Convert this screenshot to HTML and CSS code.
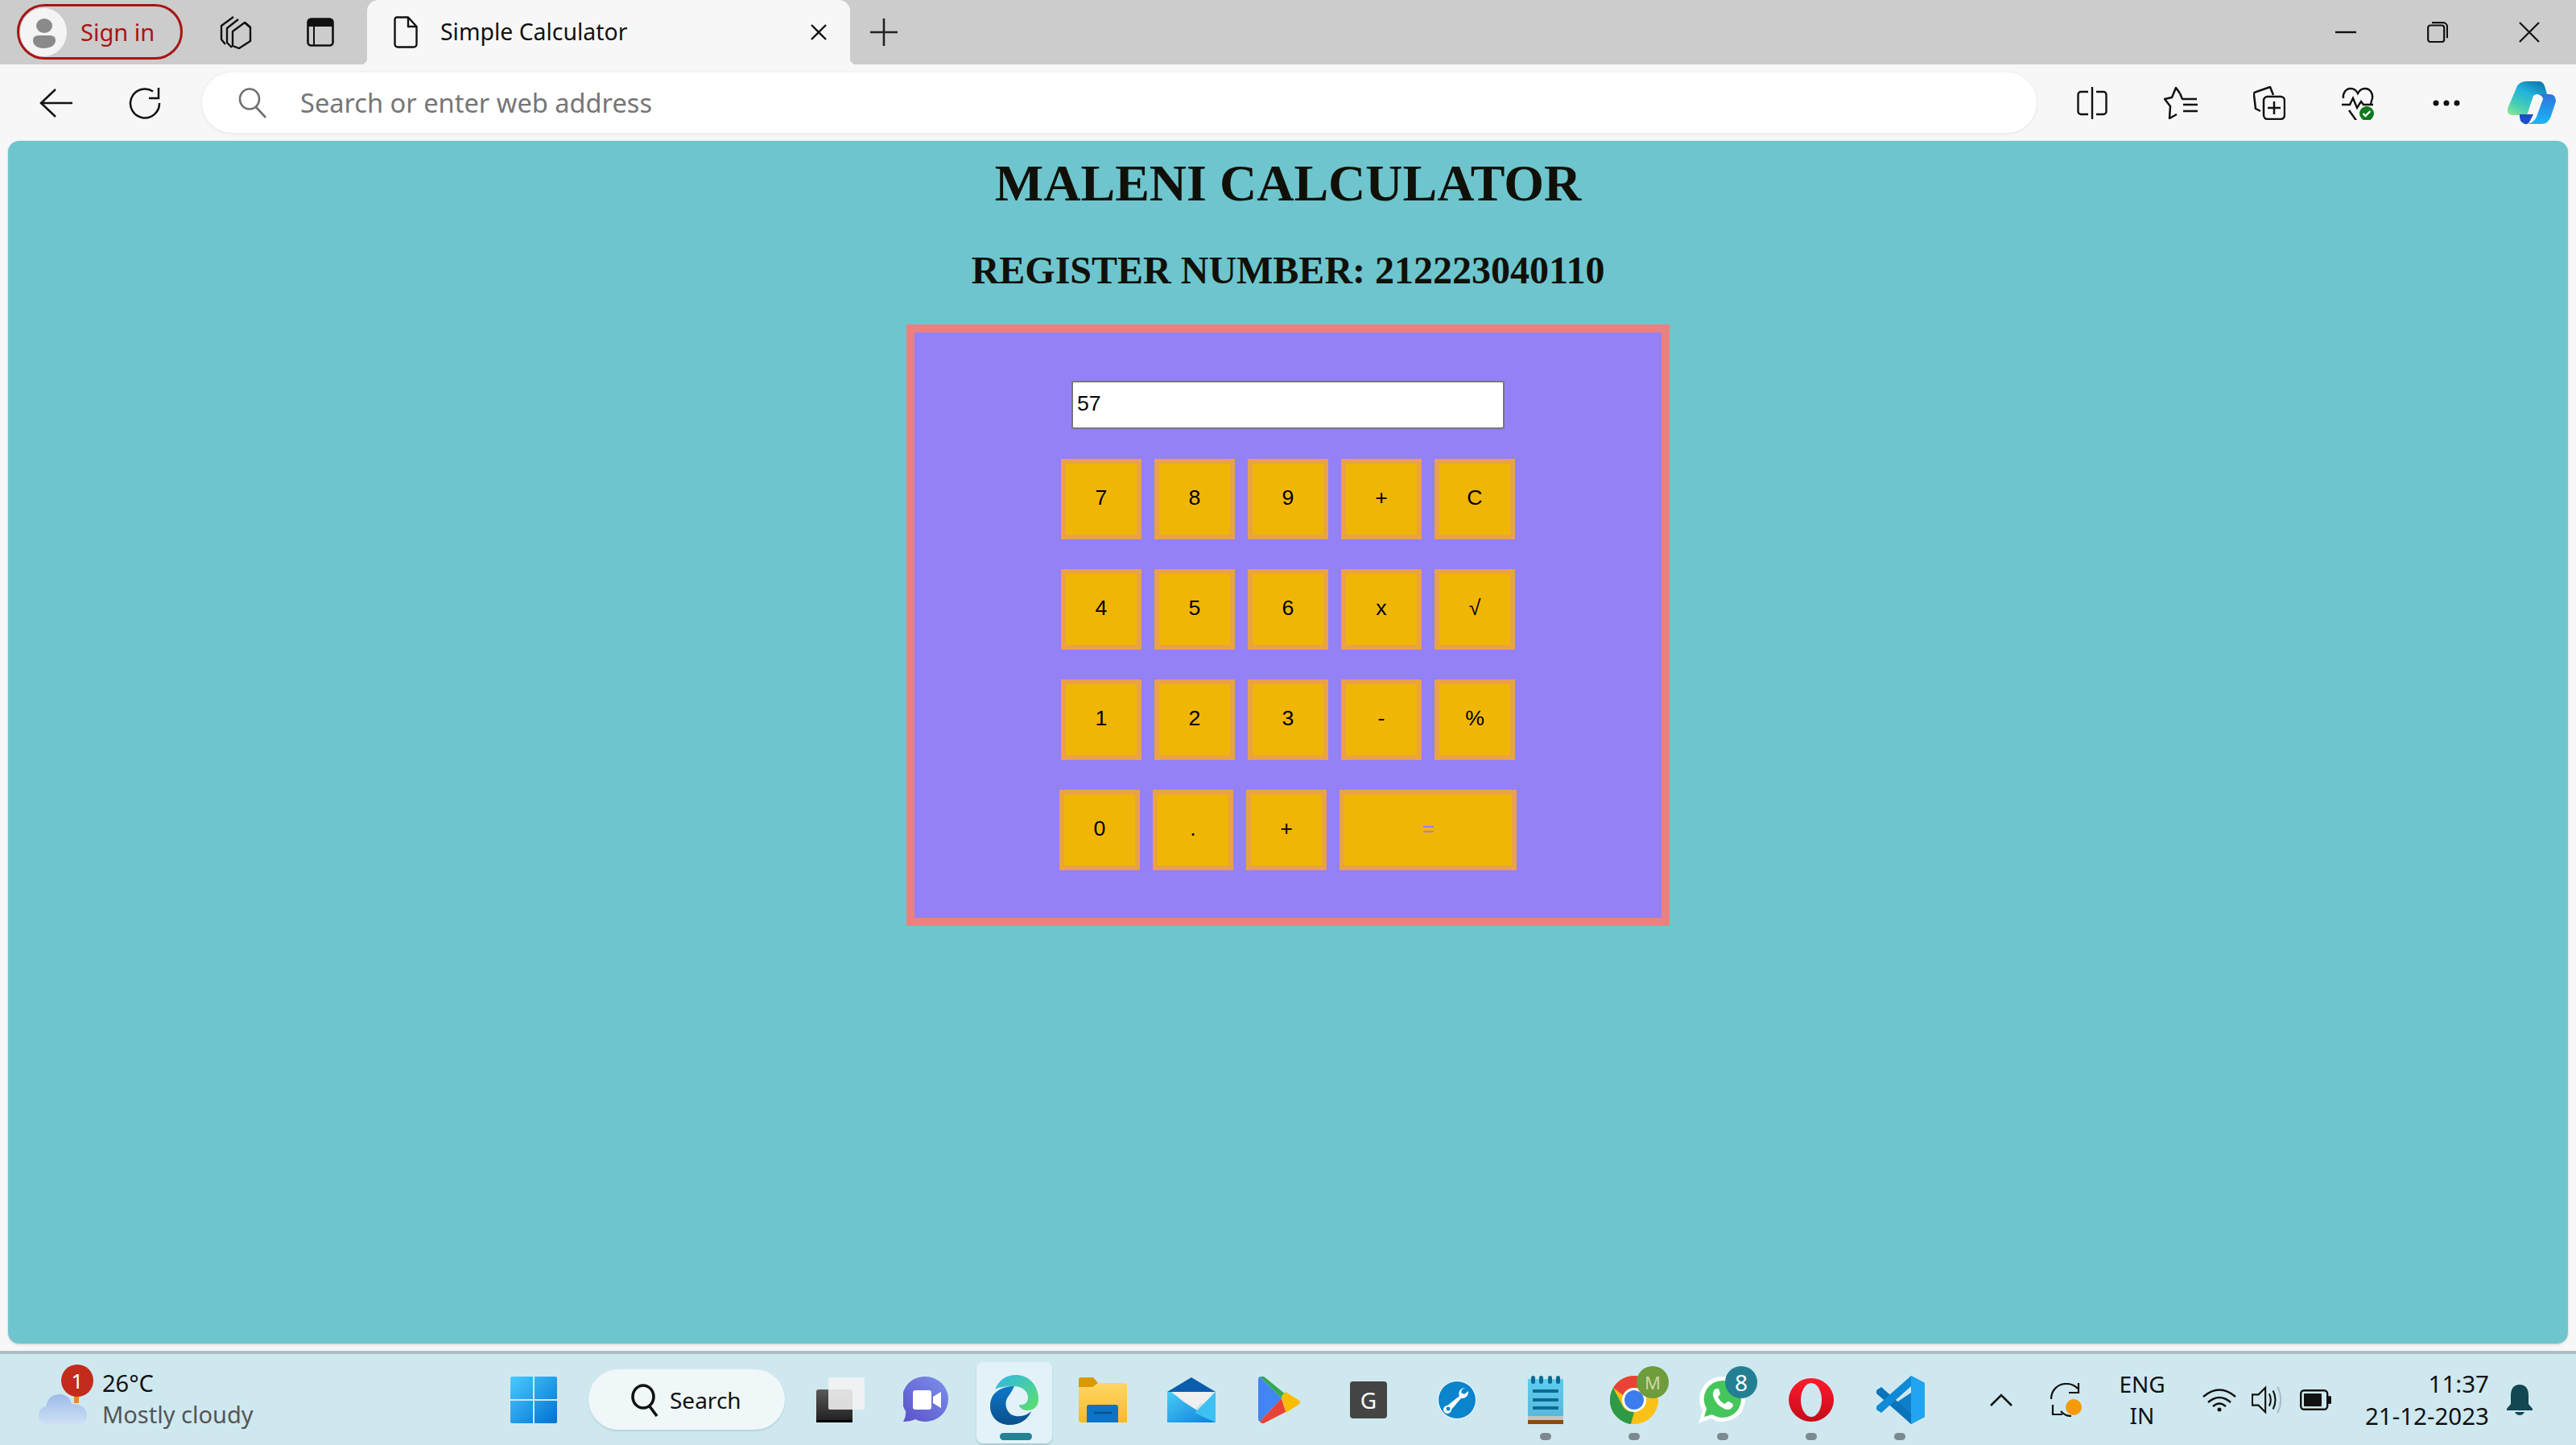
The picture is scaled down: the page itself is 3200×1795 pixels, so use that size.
FILE: index.html
```html
<!DOCTYPE html>
<html lang="en">
<head>
<meta charset="utf-8">
<title>Simple Calculator</title>
<link rel="stylesheet" href="styles.css">
</head>
<body>
<div class="window">
  <header class="tabstrip">
    <div class="signin">
      <span class="avatar"><svg width="58" height="60" viewBox="0 0 58 60"><ellipse cx="30" cy="22" rx="10" ry="9" fill="#8a8a8a"/><path d="M16 40q0-6 7-6h14q7 0 7 6q0 9-15 10q-13-1-13-10z" fill="#8a8a8a"/></svg></span>
      <span class="signin-text">Sign in</span>
    </div>
    <span class="strip-slot"><svg width="40" height="42" viewBox="0 0 40 42" fill="none" stroke="#111" stroke-width="2.4" stroke-linejoin="round"><path d="M17 2L2 13v17l5 6"/><path d="M23 5L9 16v18l6 6"/><path d="M38 15v17L24 41l-8-3V20l15-11z"/><path d="M31 9l7 6"/></svg></span>
    <span class="strip-slot"><svg width="34" height="36" viewBox="0 0 34 36"><rect x="1.5" y="1.5" width="31" height="33" rx="4" fill="none" stroke="#111" stroke-width="2.6"/><path d="M1.5 5.5a4 4 0 0 1 4-4h23a4 4 0 0 1 4 4V11h-31z" fill="#111"/><path d="M9 11v23" stroke="#111" stroke-width="2"/></svg></span>
    <div class="tab">
      <svg class="doc" width="30" height="40" viewBox="0 0 30 40" fill="none" stroke="#111" stroke-width="2.4" stroke-linejoin="round"><path d="M4 1.5h14L28.500 13v22a3.500 3.500 0 0 1-3.500 3.500H5A3.500 3.500 0 0 1 1.500 35V4A2.500 2.500 0 0 1 4 1.500z"/><path d="M18 1.500V13h10.500"/></svg>
      <span class="tab-title">Simple Calculator</span>
      <svg class="tab-close" width="22" height="22" viewBox="0 0 22 22" stroke="#111" stroke-width="2.400"><path d="M2 2l18 18M20 2L2 20"/></svg>
    </div>
    <span class="newtab"><svg width="34" height="34" viewBox="0 0 34 34" stroke="#222" stroke-width="2.600"><path d="M17 0v34M0 17h34"/></svg></span>
    <span class="strip-gap"></span>
    <span class="win-btn"><svg width="26" height="4" viewBox="0 0 26 4"><path d="M0 2h26" stroke="#111" stroke-width="2.400"/></svg></span>
    <span class="win-btn"><svg width="26" height="26" viewBox="0 0 26 26" fill="none" stroke="#111" stroke-width="2.200"><rect x="1.200" y="4.500" width="20" height="20.500" rx="3"/><path d="M6 1.200h14a5 5 0 0 1 5 5v14"/></svg></span>
    <span class="win-btn"><svg width="26" height="26" viewBox="0 0 26 26" stroke="#111" stroke-width="2.200"><path d="M1 1l24 24M25 1L1 25"/></svg></span>
  </header>

  <nav class="toolbar">
    <span class="tool-slot"><svg width="42" height="36" viewBox="0 0 42 36" fill="none" stroke="#111" stroke-width="2.500"><path d="M1 18h40M20 1L2 18l18 17"/></svg></span>
    <span class="tool-slot"><svg width="40" height="40" viewBox="0 0 40 40" fill="none" stroke="#111" stroke-width="2.500"><path d="M30 5.500A18 18 0 1 0 38 20"/><path d="M37 1v13H25"/></svg></span>
    <div class="address">
      <svg width="36" height="38" viewBox="0 0 36 38" fill="none" stroke="#707070" stroke-width="2.600"><ellipse cx="14" cy="14" rx="12" ry="12.500"/><path d="M22 24l12 13"/></svg>
      <span class="address-text">Search or enter web address</span>
    </div>
    <span class="tool-slot first-right"><svg width="38" height="40" viewBox="0 0 38 40" fill="none" stroke="#111" stroke-width="2.400"><path d="M14 6H5a3.500 3.500 0 0 0-3.500 3.500v21A3.500 3.500 0 0 0 5 34h9M24 6h9a3.500 3.500 0 0 1 3.500 3.500v21A3.500 3.500 0 0 1 33 34h-9M19 0v40"/></svg></span>
    <span class="tool-slot"><svg width="42" height="40" viewBox="0 0 42 40" fill="none" stroke="#111" stroke-width="2.500" stroke-linejoin="round"><path d="M20 8l-5-7-5 12-9 2 7 9-1 15 9-5"/><path d="M20 8l3 7h18M24 22h18M24 30h18"/></svg></span>
    <span class="tool-slot"><svg width="40" height="42" viewBox="0 0 40 42" fill="none" stroke="#111" stroke-width="2.500"><path d="M9 31l-6-3-2-17q-1-3 3-4l17-6 4 10"/><rect x="13" y="13" width="26" height="28" rx="5"/><path d="M26 19v16M18 27h16"/></svg></span>
    <span class="tool-slot"><svg width="42" height="42" viewBox="0 0 42 42"><g fill="none" stroke="#111" stroke-width="2.400"><path d="M3 15C2 9 6 3 12 3q6 0 9 6q3-6 9-6c6 0 10 6 9 12l-2 7"/><path d="M1 23h10l4-8 5 12 5-8 3 4h12"/><path d="M10 30l10 14"/></g><circle cx="32" cy="34" r="9" fill="#0f7a1e"/><path d="M27.500 34l3 3 6-6" fill="none" stroke="#fff" stroke-width="2.400"/></svg></span>
    <span class="tool-slot"><svg width="34" height="8" viewBox="0 0 34 8" fill="#111"><circle cx="4" cy="4" r="3.500"/><circle cx="17" cy="4" r="3.500"/><circle cx="30" cy="4" r="3.500"/></svg></span>
    <span class="tool-slot copilot-slot"><svg width="62" height="54" viewBox="0 0 62 54"><defs><linearGradient id="cp1" x1="0.700" y1="0" x2="0.100" y2="1"><stop offset="0" stop-color="#0f7fb5"/><stop offset=".35" stop-color="#22b4dc"/><stop offset=".75" stop-color="#4cd1b0"/><stop offset="1" stop-color="#8ce696"/></linearGradient><linearGradient id="cp2" x1="0.500" y1="0" x2="0.500" y2="1"><stop offset="0" stop-color="#2f74dc"/><stop offset="1" stop-color="#17b8f6"/></linearGradient></defs><path d="M25 0H40Q46 0 48 9L50 16H38Q33 16 32 21L25 42H7Q0 42 1 34L12 8Q15 0 25 0z" fill="url(#cp1)"/><path d="M16 41H33L29 49Q27 54 22 53Q15 50 16 41z" fill="#1c4fc4"/><path d="M38 16H53Q61 16 61 25L55 43Q52 53 43 53H26Q34 51 37 44L45 22Q44 17 38 16z" fill="url(#cp2)"/></svg></span>
  </nav>

  <div class="frame">
    <main class="page">
      <h1 class="title">MALENI CALCULATOR</h1>
      <h2 class="subtitle">REGISTER NUMBER: 212223040110</h2>
      <section class="calc">
        <input class="display" type="text" value="57">
        <div class="keys">
          <div class="key-row"><button class="key">7</button><button class="key">8</button><button class="key">9</button><button class="key">+</button><button class="key">C</button></div>
          <div class="key-row"><button class="key">4</button><button class="key">5</button><button class="key">6</button><button class="key">x</button><button class="key">√</button></div>
          <div class="key-row"><button class="key">1</button><button class="key">2</button><button class="key">3</button><button class="key">-</button><button class="key">%</button></div>
          <div class="key-row"><button class="key">0</button><button class="key">.</button><button class="key">+</button><button class="key key-wide">=</button></div>
        </div>
      </section>
    </main>
  </div>

  <footer class="taskbar">
    <div class="weather">
      <span class="weather-icon">
        <svg width="60" height="42" viewBox="0 0 60 42"><defs><linearGradient id="cl" x1="0" y1="0" x2="0" y2="1"><stop offset="0" stop-color="#9dbbe8"/><stop offset="1" stop-color="#cfe0f6"/></linearGradient></defs><path d="M44 0h6v14h-6z" fill="#ee8a1c"/><path d="M12 40Q0 40 0 29q0-9 9-11Q12 3 26 3q12 0 15 12 18 0 19 14 0 11-12 11z" fill="url(#cl)"/></svg>
        <span class="weather-badge">1</span>
      </span>
      <span class="weather-text"><span class="temp">26°C</span><span class="cond">Mostly cloudy</span></span>
    </div>
    <span class="task-slot"><svg width="58" height="58" viewBox="0 0 58 58"><defs><linearGradient id="w" x1="0" y1="0" x2="1" y2="1"><stop offset="0" stop-color="#4bcbff"/><stop offset="1" stop-color="#0071d0"/></linearGradient></defs><path d="M2 0h26v28H0V2a2 2 0 0 1 2-2zM30 0h26a2 2 0 0 1 2 2v26H30zM0 30h28v28H2a2 2 0 0 1-2-2zM30 30h28v26a2 2 0 0 1-2 2H30z" fill="url(#w)"/></svg></span>
    <div class="task-search">
      <svg width="34" height="42" viewBox="0 0 34 42" fill="none" stroke="#111" stroke-width="3.600"><ellipse cx="15" cy="17" rx="13" ry="14"/><path d="M23 29l9 12"/></svg>
      <span>Search</span>
    </div>
    <span class="task-slot slot-after-search"><svg width="60" height="56" viewBox="0 0 60 56"><defs><linearGradient id="tvd" x1="0" y1="0" x2="0" y2="1"><stop offset="0" stop-color="#5a5a5a"/><stop offset="1" stop-color="#1e1e1e"/></linearGradient></defs><rect x="0" y="15" width="45" height="41" rx="3" fill="url(#tvd)"/><rect x="15" y="0" width="45" height="40" rx="2" fill="#f2f2f2" fill-opacity=".88"/><path d="M0 53h45v3H0z" fill="#000"/></svg></span>
    <span class="task-slot"><svg width="56" height="58" viewBox="0 0 56 58"><defs><linearGradient id="mt" x1="0" y1="1" x2="1" y2="0"><stop offset="0" stop-color="#5a4fcb"/><stop offset="1" stop-color="#7d93ea"/></linearGradient></defs><path d="M28 0a28 28 0 0 1 0 56q-8 0-13-3-6 3-15 3 4-7 3-13A28 28 0 0 1 28 0z" fill="url(#mt)"/><rect x="12" y="17" width="23" height="24" rx="3" fill="#fff"/><path d="M37 25l10-6v20l-10-6z" fill="#fff"/></svg></span>
    <span class="task-slot task-active"><svg width="60" height="62" viewBox="0 0 60 62"><defs><linearGradient id="ed1" x1="0" y1="0" x2="1" y2="1"><stop offset="0" stop-color="#2fb6e8"/><stop offset="1" stop-color="#5fe06a"/></linearGradient><linearGradient id="ed2" x1="0" y1="0" x2="0" y2="1"><stop offset="0" stop-color="#0f78c9"/><stop offset="1" stop-color="#0a4f8c"/></linearGradient></defs><path d="M6 18C11 6 20 0 32 0c17 0 28 14 28 30 0 9-6 14-13 14-6 0-11-3-11-7 8 1 11-4 11-9C47 19 38 14 30 14 20 14 10 15 6 18z" fill="url(#ed1)"/><path d="M30 14c-14 0-30 6-30 25 0 13 10 23 24 23 12 0 23-6 27-17-7 7-18 8-25 4-7-5-9-16-3-23 3-4 5-8 7-12z" fill="url(#ed2)"/></svg><span class="active-bar"></span></span>
    <span class="task-slot"><svg width="60" height="56" viewBox="0 0 60 56"><defs><linearGradient id="fd" x1="0" y1="0" x2="0" y2="1"><stop offset="0" stop-color="#ffd666"/><stop offset="1" stop-color="#f7b928"/></linearGradient></defs><path d="M0 3a3 3 0 0 1 3-3h15l6 7v5H0z" fill="#d99a00"/><path d="M0 12h17l7-5h33a3 3 0 0 1 3 3v46H3a3 3 0 0 1-3-3z" fill="url(#fd)"/><path d="M10 56V37q0-3 3-3h33q3 0 3 3v19z" fill="#0c74c6"/><path d="M19 44h22" stroke="#0a4f90" stroke-width="2.400"/></svg></span>
    <span class="task-slot"><svg width="60" height="56" viewBox="0 0 60 56"><defs><linearGradient id="ml" x1="0" y1="0" x2="1" y2="1"><stop offset="0" stop-color="#48cdf7"/><stop offset="1" stop-color="#0e7fd9"/></linearGradient></defs><path d="M30 0l30 18H0z" fill="#0b5cad"/><rect x="5" y="18" width="50" height="14" fill="#f0f0f0"/><path d="M5 18h50l-25 26z" fill="#f0f0f0"/><path d="M60 18v38H30z" fill="#43c4f2" /><path d="M0 18v38h60L20 30 5 18z" fill="url(#ml)"/><path d="M60 18L34 44l26 12z" fill="#3fc0f2"/></svg></span>
    <span class="task-slot"><svg width="54" height="58" viewBox="0 0 54 58"><path d="M2 0l27 27L2 56q-2-1-2-4V4q0-3 2-4z" fill="#4285f4"/><path d="M2 0q3-1 5 0l27 22-5 5z" fill="#34a853"/><path d="M34 22l16 10q4 3 0 6l-16 10-5-21z" fill="#fbbc04" transform="translate(0 -3)"/><path d="M29 27l5 17L7 58q-3 1-5-2z" fill="#ea4335"/></svg></span>
    <span class="task-slot"><span class="g-icon">G</span></span>
    <span class="task-slot"><svg width="48" height="48" viewBox="0 0 48 48"><circle cx="24" cy="24" r="23.500" fill="#0a84cc" stroke="#fff" stroke-width="1"/><path d="M34 9a7 7 0 0 0-7 10L12 31a5 5 0 1 0 5 5l12-14a8 8 0 0 0 9-9l-5 4-4-2 1-4z" fill="#fff"/><circle cx="13" cy="35" r="2.500" fill="#0a84cc"/></svg></span>
    <span class="task-slot task-open"><svg width="44" height="60" viewBox="0 0 44 60"><defs><linearGradient id="np" x1="0" y1="0" x2="0" y2="1"><stop offset="0" stop-color="#5ccdee"/><stop offset="1" stop-color="#58b8da"/></linearGradient></defs><rect x="0" y="4" width="44" height="48" fill="url(#np)"/><rect x="0" y="50" width="44" height="6" fill="#c4c4c0"/><rect x="0" y="55" width="44" height="5" fill="#8f4a0c"/><g fill="#0b6a94"><rect x="4" y="0" width="5" height="10" rx="2.500"/><rect x="14" y="0" width="5" height="10" rx="2.500"/><rect x="25" y="0" width="5" height="10" rx="2.500"/><rect x="35" y="0" width="5" height="10" rx="2.500"/><rect x="6" y="17" width="32" height="4" rx="1"/><rect x="6" y="28" width="32" height="4" rx="1"/><rect x="6" y="38" width="32" height="4" rx="1"/></g></svg><span class="open-dot"></span></span>
    <span class="task-slot task-open"><svg width="60" height="60" viewBox="0 0 60 60"><circle cx="30" cy="30" r="30" fill="#fbc116"/><path d="M30 0a30 30 0 0 1 26 15H30a15 15 0 0 0-14 9L4 15A30 30 0 0 1 30 0z" fill="#e94335"/><path d="M4 15l12 23a15 15 0 0 0 14 7l-4 15A30 30 0 0 1 4 15z" fill="#2e9a46"/><circle cx="30" cy="30" r="15" fill="#fff"/><circle cx="30" cy="30" r="12" fill="#3b7ded"/></svg><span class="chrome-badge">M</span><span class="open-dot"></span></span>
    <span class="task-slot task-open"><svg width="60" height="62" viewBox="0 0 60 62"><path d="M30 2a28 28 0 0 1 0 56q-8 0-14-4L0 60l5-16A28 28 0 0 1 30 2z" fill="#fff"/><path d="M30 7a23 23 0 0 1 0 46q-7 0-13-4L7 52l3-10A23 23 0 0 1 30 7z" fill="#45c65a"/><path d="M22 17q-5 2-4 9 3 11 14 16 8 3 11-4 0-3-6-5-2 0-4 3-6-2-9-9 3-2 3-4l-2-6z" fill="#fff"/></svg><span class="wa-badge">8</span><span class="open-dot"></span></span>
    <span class="task-slot task-open"><svg width="56" height="54" viewBox="0 0 56 54"><defs><linearGradient id="op" x1="0" y1="0" x2="0" y2="1"><stop offset="0" stop-color="#ff1b2d"/><stop offset="1" stop-color="#c40b18"/></linearGradient></defs><ellipse cx="28" cy="27" rx="28" ry="27" fill="url(#op)"/><ellipse cx="28" cy="27" rx="13" ry="21" fill="#cfe8ef"/></svg><span class="open-dot"></span></span>
    <span class="task-slot task-open"><svg width="62" height="60" viewBox="0 0 62 60"><path d="M45 0l17 9v42l-17 9-24-23 24-16z" fill="#0e7fc8"/><path d="M45 0l17 9v42l-17 9z" fill="#22a5f0"/><path d="M2 18L8 14l37 33v13L2 22z" fill="#0a74bb"/><path d="M2 42L8 46 45 13V0L2 38z" fill="#0e8ad6"/></svg><span class="open-dot"></span></span>

    <span class="tray tray-caret"><svg width="28" height="16" viewBox="0 0 28 16" fill="none" stroke="#111" stroke-width="2.600"><path d="M1 15L14 2l13 13"/></svg></span>
    <span class="tray tray-sync"><svg width="42" height="42" viewBox="0 0 42 42"><g fill="none" stroke="#111" stroke-width="2.200"><path d="M1 20C1 9 9 1 20 1q9 0 14 6"/><path d="M35 0v12H23"/><path d="M26 41q-8 0-13-6"/><path d="M3 27v12h12"/></g><ellipse cx="29" cy="30" rx="10" ry="10" fill="#f79a09"/></svg></span>
    <span class="tray tray-lang"><span>ENG</span><span>IN</span></span>
    <span class="tray tray-wifi"><svg width="42" height="30" viewBox="0 0 42 30" fill="none" stroke="#111" stroke-width="2.400"><path d="M1 11Q21-6 41 11M7 18Q21 6 35 18M13 23q8-7 16 0"/><circle cx="21" cy="27" r="2.500" fill="#111" stroke="none"/></svg></span>
    <span class="tray tray-vol"><svg width="42" height="36" viewBox="0 0 42 36" fill="none" stroke="#111" stroke-width="2.200"><path d="M1 11h8L18 2v32l-9-9H1z"/><path d="M23 10q4 8 0 16M28 6q6 12 0 24"/><path d="M34 1q8 17 0 34" stroke="#a9bfc6"/></svg></span>
    <span class="tray tray-bat"><svg width="40" height="26" viewBox="0 0 40 26"><rect x="1.200" y="1.200" width="33" height="23.600" rx="4" fill="none" stroke="#111" stroke-width="2.400"/><rect x="5" y="5" width="22" height="16" rx="1" fill="#111"/><rect x="35" y="8" width="4" height="10" rx="1.500" fill="#111"/></svg></span>
    <span class="tray-clock"><span>11:37</span><span>21-12-2023</span></span>
    <span class="tray tray-bell"><svg width="32" height="38" viewBox="0 0 32 38"><path d="M16 0q11 0 11 14v10l5 6v2H0v-2l5-6V14Q5 0 16 0z" fill="#134752"/><path d="M10 34h12q-2 4-6 4t-6-4z" fill="#134752"/></svg></span>
  </footer>
</div>
</body>
</html>
```

FILE: styles.css
```css
* { box-sizing: border-box; }
html, body { margin: 0; padding: 0; }
body { background: #f7f7f7; font-family: "Noto Sans", "Open Sans", sans-serif; }
.window { width: 3200px; height: 1795px; display: flex; flex-direction: column; overflow: hidden; }

/* Tab strip */
.tabstrip { height: 80px; flex: none; display: flex; align-items: center; background: #cccccc; padding: 0 1px 0 21px; }
.signin { width: 206px; height: 69px; margin-top: -1px; flex: none; display: flex; align-items: center; gap: 17px; padding-left: 1px; border: 3px solid #a81414; border-radius: 35px; color: #a81414; font-size: 29px; }
.avatar { width: 58px; height: 60px; background: #f4f4f4; border-radius: 50%; display: flex; }
.signin-text { white-space: nowrap; }
.strip-slot { width: 105px; flex: none; display: flex; justify-content: center; }
.signin + .strip-slot { margin-left: 13px; }
.tab { position: relative; width: 600px; height: 80px; margin-left: 6px; flex: none; display: flex; align-items: center; background: #f7f7f7; border-radius: 14px 14px 0 0; padding: 0 28px 0 33px; }
.tab::before, .tab::after { content: ""; position: absolute; bottom: 0; width: 8px; height: 8px; }
.tab::before { left: -8px; background: radial-gradient(circle at 0 0, #cccccc 8px, #f7f7f7 8.5px); }
.tab::after { right: -8px; background: radial-gradient(circle at 100% 0, #cccccc 8px, #f7f7f7 8.5px); }
.tab-title { margin-left: 28px; flex: 1; margin-top: -2px; font-size: 28.4px; color: #111; white-space: nowrap; }
.newtab { width: 84px; flex: none; display: flex; justify-content: center; }
.strip-gap { flex: 1; }
.win-btn { width: 114px; flex: none; display: flex; justify-content: center; }

/* Toolbar */
.toolbar { height: 95px; flex: none; display: flex; align-items: center; background: #f7f7f7; padding-left: 15px; }
.tool-slot { width: 110px; flex: none; display: flex; justify-content: center; }
.address { width: 2279px; height: 75px; margin-left: 16px; flex: none; display: flex; align-items: center; gap: 41px; padding-left: 45px; background: #fff; border-radius: 38px; box-shadow: 0 1px 4px rgba(0,0,0,.08); }
.address-text { font-size: 32.6px; color: #767676; white-space: nowrap; }
.first-right { margin-left: 14px; }
.copilot-slot { margin-left: -4px; }

/* Page */
.frame { height: 503px; flex: 1; padding: 0 10px 9px; background: #f7f7f7; }
.page { height: 100%; background: #6ec5cd; border-radius: 14px; display: flex; flex-direction: column; align-items: center; box-shadow: 0 1px 3px rgba(0,0,0,.18); }
.title { margin: 16px 0 0; font: bold 64px/74px "Liberation Serif", serif; color: #111008; white-space: nowrap; }
.subtitle { margin: 43px 0 0; font: bold 48px/56px "Liberation Serif", serif; color: #111008; white-space: nowrap; }
.calc { width: 948px; height: 747px; margin-top: 39px; flex: none; display: flex; flex-direction: column; align-items: center; padding-top: 60px; background: #9381f5; border: 10px solid #eb8080; }
.display { width: 538px; height: 60px; flex: none; padding: 0 5px 3px; font: 26.67px "Liberation Sans", Arial, sans-serif; color: #000; background: #fff; border: 2px solid #767676; border-radius: 3px; }
.keys { margin-top: 37px; display: flex; flex-direction: column; gap: 37px; }
.key-row { display: flex; justify-content: center; gap: 16px; }
.key { width: 100px; height: 100px; padding: 0 0 4px; font: 26.67px "Liberation Sans", Arial, sans-serif; color: #000; background: #f0b606; border: 6px solid #e9a246; }
.key-wide { width: 220px; color: #9381f5; }

/* Taskbar */
.taskbar { height: 117px; flex: none; display: flex; align-items: center; background: #cfe8ef; border-top: 4px solid #aebdc3; }
.weather { width: 608px; flex: none; display: flex; align-items: center; gap: 19px; padding-left: 48px; }
.weather-icon { position: relative; width: 60px; height: 42px; margin-top: 22px; display: flex; }
.weather-badge { position: absolute; left: 28px; top: -34px; width: 40px; height: 40px; display: flex; align-items: center; justify-content: center; border-radius: 50%; background: #c32b1c; color: #fff; font-size: 26px; }
.weather-text { display: flex; flex-direction: column; margin-top: -2px; }
.temp { font-size: 29px; line-height: 38px; color: #111; }
.cond { font-size: 29px; line-height: 40px; color: #555; white-space: nowrap; }
.task-slot { position: relative; width: 110px; height: 113px; flex: none; display: flex; align-items: center; justify-content: center; }
.task-search { width: 244px; height: 75px; margin-left: 13px; flex: none; display: flex; align-items: center; gap: 14px; padding-left: 53px; background: #eff7f9; border-radius: 38px; box-shadow: 0 2px 2px rgba(80,130,150,.2); font-size: 28px; color: #111; }
.slot-after-search { margin-left: 14px; margin-right: -4px; }
.task-active::before { content: ""; position: absolute; left: 8px; right: 8px; top: 10px; bottom: 2px; background: #e3f2f8; border-radius: 8px; box-shadow: 0 2px 2px rgba(80,130,150,.3); }
.task-active svg { position: relative; }
.active-bar { position: absolute; left: 37px; bottom: 6px; width: 40px; height: 9px; border-radius: 5px; background: #238293; }
.open-dot { position: absolute; left: 48px; bottom: 6px; width: 14px; height: 9px; border-radius: 5px; background: #7c8a8f; }
.g-icon { width: 46px; height: 46px; display: flex; align-items: center; justify-content: center; background: #444; border-radius: 4px; color: #fff; font-size: 28px; }
.chrome-badge { position: absolute; left: 58px; top: 15px; width: 40px; height: 40px; display: flex; align-items: center; justify-content: center; border-radius: 50%; background: #6f9c3c; color: #cfd8a8; font-size: 22px; }
.wa-badge { position: absolute; left: 58px; top: 15px; width: 40px; height: 40px; display: flex; align-items: center; justify-content: center; border-radius: 50%; background: #238093; color: #fff; font-size: 28px; }
.tray { flex: none; display: flex; justify-content: center; color: #111; }
.tray-caret { width: 90px; margin-left: 26px; }
.tray-sync { width: 74px; }
.tray-lang { width: 112px; flex-direction: column; align-items: center; font-size: 28px; line-height: 39px; }
.tray-wifi { width: 80px; }
.tray-vol { width: 40px; }
.tray-bat { width: 80px; }
.tray-clock { width: 175px; flex: none; display: flex; flex-direction: column; align-items: flex-end; font-size: 29.5px; line-height: 40px; color: #111; white-space: nowrap; }
.tray-bell { width: 76px; }
```
